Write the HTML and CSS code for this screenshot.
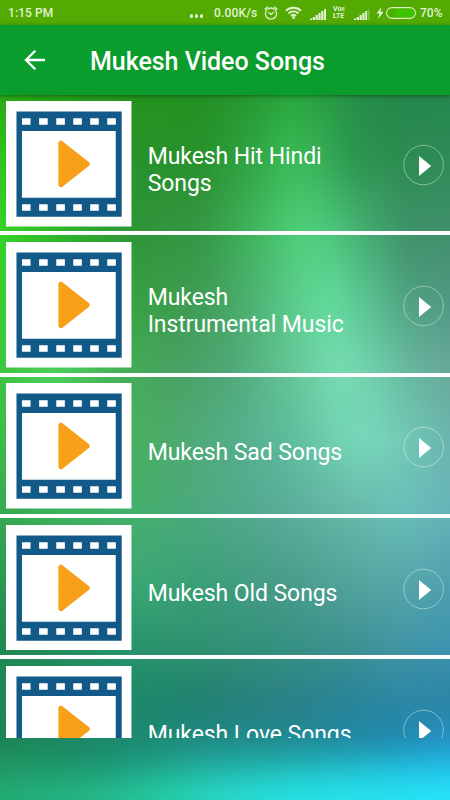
FILE: index.html
```
<!DOCTYPE html>
<html lang="en">
<head>
<meta charset="utf-8">
<title>Mukesh Video Songs</title>
<link rel="stylesheet" href="styles.css">
</head>
<body>
<svg class="defs" width="0" height="0" aria-hidden="true">
  <symbol id="film" viewBox="0 0 126 126">
    <rect width="126" height="126" fill="#fff"/>
    <path fill="#115a87" fill-rule="evenodd" d="M10.5 10.5h105.5v105.5h-105.5zM16 30v67h94v-67z"/>
    <path fill="#fff" d="M16 17.2h8.6v6.6H16zM33.2 17.2h8.6v6.6h-8.6zM50.4 17.2H59v6.6h-8.6zM67.4 17.2H76v6.6h-8.6zM84.4 17.2H93v6.6h-8.6zM101.5 17.2h8.6v6.6h-8.6zM16 103.4h8.6v6.6H16zM33.2 103.4h8.6v6.6h-8.6zM50.4 103.4H59v6.6h-8.6zM67.4 103.4H76v6.6h-8.6zM84.4 103.4H93v6.6h-8.6zM101.5 103.4h8.6v6.6h-8.6z"/>
    <path fill="#f7a01a" stroke="#f7a01a" stroke-width="5" stroke-linejoin="round" d="M55 42.3v41.7L81.5 63.1z"/>
  </symbol>
  <symbol id="go" viewBox="0 0 42 42">
    <circle cx="21.6" cy="21" r="19.8" fill="none" stroke="#fff" stroke-opacity=".5" stroke-width=".8"/>
    <path fill="#fff" d="M17 12v20l12.2-10z"/>
  </symbol>
</svg>
<div class="screen">
  <div class="backdrop">
    <i class="b1"></i><i class="b2"></i><i class="b3"></i><i class="b4"></i><i class="b5"></i><i class="b6"></i><i class="b7"></i><i class="b8"></i><i class="b9"></i><i class="b10"></i><i class="b11"></i><i class="b12"></i><i class="b13"></i>
  </div>
  <div class="app">
    <div class="status">
      <span class="clock">1:15 PM</span>
      <span class="dots"><i></i><i></i><i></i></span>
      <span class="rate">0.00K/s</span>
      <svg class="alarm" viewBox="0 0 14 14" width="14" height="14" fill="none" stroke="#e2f2d2" stroke-width="1.3"><circle cx="7" cy="7.6" r="5.6"/><path d="M.6 3.4 3.8.7M13.4 3.4 10.2.7M4.4 6.2 7 8.4 9.8 6"/></svg>
      <svg class="wifi" viewBox="0 0 17 13" width="17" height="13" fill="none" stroke="#e2f2d2" stroke-width="1.8"><path d="M1 4.8a10.7 10.7 0 0 1 15 0M3.5 7.5a7.1 7.1 0 0 1 10 0M6 10a3.6 3.6 0 0 1 5 0"/><circle cx="8.5" cy="11.5" r=".6"/></svg>
      <svg class="sig" viewBox="0 0 16 11" width="16" height="11" fill="#e2f2d2"><path d="M0 9.6h2.2V11H0zM2.8 8h2.2v3H2.8zM5.6 6h2.2v5H5.6zM8.4 4h2.2v7H8.4zM11.2 2h2.2v9h-2.2zM14 0h2v11h-2z"/></svg>
      <span class="volte"><b>Vo<i>ll</i></b><b>LTE</b></span>
      <svg class="sig2" viewBox="0 0 16 11" width="16" height="11" fill="#e2f2d2"><path d="M0 9.6h2.2V11H0zM2.8 8h2.2v3H2.8zM5.6 6h2.2v5H5.6zM8.4 4h2.2v7H8.4zM11.2 2H13v9h-1.8z"/><path opacity=".3" d="M13.6 0h2v11h-2z"/></svg>
      <svg class="bolt" viewBox="0 0 8 12" width="8" height="12" fill="#e2f2d2"><path d="M5.5 0 .5 6.6h3L2.2 12l5.3-7.2H4.4z"/></svg>
      <svg class="battery" viewBox="0 0 30 12" width="30" height="12"><rect x=".6" y=".6" width="28.8" height="10.8" rx="5.4" fill="#4cb000" stroke="#d9efc0" stroke-width="1.1"/><path fill="#3fc400" d="M9.5 2h14.7a4 4 0 0 1 0 8H9.5z"/></svg>
      <span class="pct">70%</span>
    </div>
    <header class="bar">
      <svg class="back" viewBox="0 0 22 22" width="22" height="22" fill="none" stroke="#fff" stroke-width="2.3"><path d="M21 11H2.5M11.3 1.7 2 11l9.3 9.3"/></svg>
      <h1>Mukesh Video Songs</h1>
    </header>
    <main class="viewport">
      <ul class="list">
        <li><svg class="thumb"><use href="#film"/></svg><span class="name">Mukesh Hit Hindi Songs</span><svg class="go"><use href="#go"/></svg></li>
        <li><svg class="thumb"><use href="#film"/></svg><span class="name">Mukesh Instrumental Music</span><svg class="go"><use href="#go"/></svg></li>
        <li><svg class="thumb"><use href="#film"/></svg><span class="name">Mukesh Sad Songs</span><svg class="go"><use href="#go"/></svg></li>
        <li><svg class="thumb"><use href="#film"/></svg><span class="name">Mukesh Old Songs</span><svg class="go"><use href="#go"/></svg></li>
        <li><svg class="thumb"><use href="#film"/></svg><span class="name">Mukesh Love Songs</span><svg class="go"><use href="#go"/></svg></li>
      </ul>
    </main>
  </div>
</div>
</body>
</html>
```
FILE: styles.css
```
* { box-sizing: border-box; }
body { margin: 0; font-family: Roboto, "Liberation Sans", sans-serif; color: #fff; }
.defs { display: block; }
.screen { display: grid; width: 450px; height: 800px; overflow: hidden; }
.backdrop, .app { grid-area: 1 / 1; min-height: 0; min-width: 0; }

/* Backdrop: horizontal colour bands, each fading in over the previous one.
   It bleeds 40px past the sides and bottom so the blur has no soft edges. */
.backdrop { display: grid; margin: 0 -40px -40px; filter: blur(10px); }
.backdrop i {
  grid-area: 1 / 1;
  -webkit-mask-image: linear-gradient(to bottom, transparent var(--from), #000 var(--to));
  mask-image: linear-gradient(to bottom, transparent var(--from), #000 var(--to));
}
.b1 { --from: 0px; --to: 1px; background: linear-gradient(90deg, #2aa816 40px, #24931c 175px, #249022 240px, #279832 290px, #29a83c 330px, #28a040 360px, #269048 390px, #25864a 440px, #258850 490px); }
.b2 { --from: 95px; --to: 160px; background: linear-gradient(90deg, #30c81c 40px, #28922c 175px, #28912c 240px, #2fa544 290px, #3bbc58 330px, #38b058 360px, #2d9850 390px, #2c8c50 440px, #2f8c58 490px); }
.b3 { --from: 160px; --to: 230px; background: linear-gradient(90deg, #35d428 40px, #2cb028 110px, #2f9438 175px, #359645 240px, #3fb45c 290px, #50d07a 340px, #4cc87a 370px, #43a870 410px, #3f9068 450px, #40906c 490px); }
.b4 { --from: 230px; --to: 300px; background: linear-gradient(90deg, #3ad030 40px, #38a040 175px, #3f9c54 240px, #4cb070 290px, #5cd090 340px, #62dc9c 370px, #58c090 410px, #4fa080 450px, #509884 490px); }
.b5 { --from: 300px; --to: 370px; background: linear-gradient(90deg, #3cc440 40px, #4cd45c 90px, #44aa58 175px, #4aa065 220px, #4fa878 270px, #60c090 320px, #78deb4 380px, #70d0ac 410px, #68b8a0 450px, #68a898 490px); }
.b6 { --from: 370px; --to: 440px; background: linear-gradient(90deg, #3cbc48 40px, #4ab060 175px, #4eaa70 220px, #55b090 290px, #62c0a0 340px, #72d4b4 380px, #7ad8bc 410px, #70c8b4 450px, #6cb4b0 490px); }
.b7 { --from: 440px; --to: 510px; background: linear-gradient(90deg, #38a850 40px, #3cb45c 100px, #46b06c 175px, #4ca880 240px, #58ac98 320px, #68b8a8 390px, #68c0b8 440px, #68b4b8 490px); }
.b8 { --from: 510px; --to: 580px; background: linear-gradient(90deg, #289850 40px, #3ca874 175px, #3ca078 240px, #489c88 320px, #54a49c 390px, #58a8a8 440px, #50a0b0 490px); }
.b9 { --from: 580px; --to: 650px; background: linear-gradient(90deg, #208850 40px, #28946c 175px, #2e9070 240px, #349080 320px, #3c9090 390px, #4094a4 440px, #3c94b0 490px); }
.b10 { --from: 650px; --to: 700px; background: linear-gradient(90deg, #1e8858 40px, #1c8868 175px, #208070 240px, #2c8084 320px, #288498 390px, #2c88a4 440px, #2c84a4 490px); }
.b11 { --from: 700px; --to: 737px; background: linear-gradient(90deg, #1c8454 40px, #1c8870 175px, #208880 240px, #208890 320px, #2088a0 390px, #2088b0 440px, #2490c0 490px); }
.b12 { --from: 737px; --to: 765px; background: linear-gradient(90deg, #1f9460 40px, #1c9470 140px, #1fa898 240px, #20b0ac 320px, #20b4c4 390px, #22b8e8 490px); }
.b13 { --from: 762px; --to: 792px; background: linear-gradient(90deg, #22aa74 40px, #24b888 140px, #24cca8 210px, #28d8cc 270px, #26e0e4 340px, #26e2f8 490px); }

.app { display: flex; flex-direction: column; z-index: 1; }
.status { display: flex; align-items: center; height: 25px; flex: none; padding-left: 8px; background: #52aa02; color: #e2f2d2; font-size: 12px; font-weight: 500; }
.status svg { flex: none; }
.clock { width: 181.5px; flex: none; letter-spacing: .1px; }
.dots { display: flex; gap: 1.5px; width: 24.5px; padding-top: 7px; flex: none; }
.dots i { width: 3.6px; height: 3.6px; border-radius: 50%; background: #e2f2d2; }
.rate { width: 50px; flex: none; letter-spacing: .15px; }
.wifi { margin-left: 7px; }
.sig { margin: 3px 0 0 8px; }
.volte { display: flex; flex-direction: column; width: 14px; margin-left: 7px; font-size: 7px; line-height: 7px; }
.volte b { display: block; height: 7px; font-weight: 700; white-space: nowrap; }
.volte i { font-size: 6px; line-height: 6px; font-style: normal; }
.sig2 { margin: 3px 0 0 7px; }
.bolt { margin-left: 6px; }
.battery { margin: 0 4px 0 2px; }

.bar { display: flex; align-items: center; height: 70px; flex: none; padding-left: 24px; background: #0a9c2c; box-shadow: 0 1px 4px rgba(0, 50, 0, .55); position: relative; z-index: 2; }
.back { width: 22px; margin-right: 44px; }
h1 { margin: 3px 0 0; font-size: 25px; font-weight: 500; line-height: 30px; letter-spacing: -.04px; white-space: nowrap; }

.viewport { height: 643px; overflow: hidden; flex: none; }
.list { margin: -.8px 0 0; padding: 0; list-style: none; }
.list li { display: flex; align-items: flex-start; height: 141.2px; padding: 6.9px 6px 0 6px; border-bottom: 4px solid #fff; }
.thumb { width: 125.7px; height: 125.7px; flex: none; }
.name { align-self: center; width: 208px; margin: 7px 0 0 16px; font-size: 23px; line-height: 27px; letter-spacing: -.08px; }
.go { width: 42px; height: 42px; margin: 43px 0 0 auto; flex: none; }
```
